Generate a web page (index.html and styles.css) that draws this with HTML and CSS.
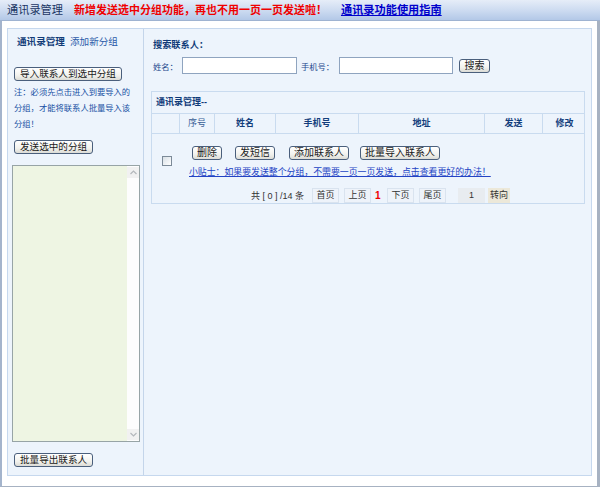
FILE: index.html
```html
<!DOCTYPE html>
<html lang="zh-CN">
<head>
<meta charset="utf-8">
<title>通讯录管理</title>
<link rel="stylesheet" href="styles.css">
</head>
<body>
<div class="topbar">
  <span class="tb-title">通讯录管理</span>
  <span class="tb-news">新增发送选中分组功能，再也不用一页一页发送啦！</span>
  <a class="tb-guide" href="#">通讯录功能使用指南</a>
</div>
<div class="frame">
  <div class="panel">
    <aside class="side">
      <div class="side-head"><b>通讯录管理</b><a href="#">添加新分组</a></div>
      <button class="btn btn-side btn-import">导入联系人到选中分组</button>
      <p class="note">注：必须先点击进入到要导入的<br>分组，才能将联系人批量导入该<br>分组！</p>
      <button class="btn btn-side btn-send">发送选中的分组</button>
      <div class="groupbox">
        <div class="gb-area"></div>
        <div class="gb-scroll">
          <span class="arr"><svg width="7" height="5" viewBox="0 0 7 5"><polyline points="0.5,4 3.5,1 6.5,4" fill="none" stroke="#b4b8bc" stroke-width="1.2"/></svg></span>
          <span class="arr"><svg width="7" height="5" viewBox="0 0 7 5"><polyline points="0.5,1 3.5,4 6.5,1" fill="none" stroke="#b4b8bc" stroke-width="1.2"/></svg></span>
        </div>
      </div>
      <button class="btn btn-side btn-export">批量导出联系人</button>
    </aside>
    <main class="main">
      <div class="search">
        <div class="s-title">搜索联系人：</div>
        <div class="s-row">
          <label class="s-label">姓名：</label>
          <input class="s-input s-name" type="text">
          <label class="s-label s-label2">手机号：</label>
          <input class="s-input s-phone" type="text">
          <button class="btn btn-search">搜索</button>
        </div>
      </div>
      <div class="list">
        <div class="list-title">通讯录管理--</div>
        <div class="list-cols">
          <div class="col"></div>
          <div class="col col-light">序号</div>
          <div class="col">姓名</div>
          <div class="col">手机号</div>
          <div class="col">地址</div>
          <div class="col">发送</div>
          <div class="col">修改</div>
        </div>
        <div class="list-body">
          <div class="lb-check"><span class="checkbox"></span></div>
          <div class="lb-main">
            <div class="actions">
              <button class="btn btn-act">删除</button>
              <button class="btn btn-act">发短信</button>
              <button class="btn btn-act">添加联系人</button>
              <button class="btn btn-act">批量导入联系人</button>
            </div>
            <a class="tip" href="#">小贴士：如果要发送整个分组，不需要一页一页发送，点击查看更好的办法！</a>
            <div class="pager">
              <span class="pg-total">共 [ 0 ] /14 条</span>
              <span class="pg-box">首页</span>
              <span class="pg-box pg-prev">上页</span>
              <span class="pg-cur">1</span>
              <span class="pg-box">下页</span>
              <span class="pg-box pg-last">尾页</span>
              <span class="pg-input">1</span>
              <span class="pg-go">转向</span>
            </div>
          </div>
        </div>
      </div>
    </main>
  </div>
</div>
</body>
</html>
```

FILE: styles.css
```css
* { box-sizing: border-box; }
html, body { margin: 0; padding: 0; }
body {
  width: 600px;
  height: 487px;
  overflow: hidden;
  background: #fff;
  font-family: "Liberation Sans", "Noto Sans CJK SC", sans-serif;
  color: #1e4a8e;
}
a { color: inherit; text-decoration: none; }

.topbar {
  height: 21px;
  border-bottom: 1px solid #9fb3d1;
  background: linear-gradient(#e6edf8, #cbdaf0 55%, #b3c8e7);
  display: flex;
  align-items: center;
  padding-left: 7px;
  white-space: nowrap;
}
.tb-title { font-size: 11.2px; line-height: 20px; color: #1b3563; }
.tb-news { margin-left: 11px; font-size: 11px; line-height: 20px; font-weight: bold; color: #f00000; }
.tb-guide { margin-left: 14px; font-size: 11.2px; line-height: 20px; font-weight: bold; color: #0000cc; text-decoration: underline; }

.frame {
  height: 466px;
  border-left: 2px solid #a4b4cc;
  border-right: 3px solid #a7b2c2;
  border-bottom: 1px solid #a7b2c2;
  padding: 7px 5px 10px 5px;
}
.panel {
  height: 448px;
  border: 1px solid #c6d8ee;
  background: #edf4fc;
  display: flex;
}

/* ---------- side column ---------- */
.side {
  width: 136px;
  flex: none;
  border-right: 1px solid #c4d5ea;
  padding-left: 6px;
  display: flex;
  flex-direction: column;
  align-items: flex-start;
}
.side-head {
  margin-top: 6px;
  margin-left: 3px;
  line-height: 14px;
  font-size: 9.6px;
  white-space: nowrap;
}
.side-head b { color: #123c78; }
.side-head a { margin-left: 5px; color: #2a5aa8; }

.btn {
  font-family: "Liberation Sans", "Noto Sans CJK SC", sans-serif;
  margin: 0;
  height: 14px;
  line-height: 12px;
  padding: 0 4px;
  border: 1px solid #4a5f7c;
  border-radius: 3px;
  background: linear-gradient(#ffffff, #f2f2ee 60%, #dcdcd6);
  color: #1a1a1a;
  white-space: nowrap;
  cursor: default;
}
.btn-side { font-size: 9.6px; padding: 0 5px; }
.btn-import { margin-top: 18px; }
.note {
  margin: 3px 0 0 0;
  font-size: 8.3px;
  line-height: 16px;
  color: #2052a4;
  white-space: nowrap;
}
.btn-send { margin-top: 8px; }

.groupbox {
  margin: 11px 0 0 -2px;
  width: 128px;
  height: 277px;
  border: 1px solid #97a4a6;
  display: flex;
}
.gb-area { flex: 1; background: #eef5e3; }
.gb-scroll {
  width: 12px;
  background: #fdfdfd;
  display: flex;
  flex-direction: column;
  justify-content: space-between;
  padding: 1px 0;
}
.arr {
  height: 11px;
  background: #f1f1f1;
  display: flex;
  align-items: center;
  justify-content: center;
}
.btn-export { margin-top: 11px; }

/* ---------- main column ---------- */
.main {
  flex: 1;
  padding: 9px 6px 0 7px;
}
.search { padding-left: 2px; }
.s-title {
  line-height: 14px;
  font-size: 9.2px;
  font-weight: bold;
  color: #0f3a78;
}
.s-row {
  margin-top: 5px;
  height: 17px;
  display: flex;
  align-items: center;
}
.s-label { font-size: 8.3px; color: #1e4a8e; white-space: nowrap; }
.s-input {
  height: 17px;
  margin: 0 0 0 4px;
  padding: 0;
  border: 1px solid #8fa4bf;
  background: #fff;
}
.s-name { width: 115px; }
.s-label2 { margin-left: 4px; }
.s-phone { width: 114px; margin-left: 5px; }
.btn-search { margin-left: 6px; font-size: 10px; width: 31px; padding: 0; }

.list {
  margin-top: 17px;
  width: 434px;
  border: 1px solid #c9dbef;
}
.list-title {
  height: 22px;
  border-bottom: 1px solid #c9dbef;
  padding-left: 4px;
  line-height: 21px;
  font-size: 9px;
  font-weight: bold;
  color: #0f3a78;
}
.list-cols {
  height: 20px;
  border-bottom: 1px solid #c9dbef;
  display: grid;
  grid-template-columns: 27px 35px 61px 83px 126px 58px 44px;
  margin-right: -1px;
}
.col {
  border-left: 1px solid #c9dbef;
  text-align: center;
  line-height: 19px;
  font-size: 9px;
  font-weight: bold;
  color: #133e7c;
}
.col:first-child { border-left: none; }
.col-light { font-weight: normal; color: #3a5f96; }

.list-body { height: 69px; display: flex; }
.lb-check { width: 27px; flex: none; padding: 22px 0 0 10px; }
.checkbox {
  display: block;
  width: 10px;
  height: 10px;
  border: 1px solid #7c8a98;
  background: linear-gradient(135deg, #d9e0e6, #ffffff);
}
.lb-main { flex: 1; padding: 12px 0 0 10px; }
.actions { display: flex; margin-left: 3px; }
.btn-act { font-size: 10px; margin-right: 13px; }
.btn-act:nth-child(2) { margin-right: 14px; }
.btn-act:nth-child(3) { margin-right: 11px; }
.tip {
  display: block;
  margin-top: 6px;
  line-height: 12px;
  font-size: 8.9px;
  color: #2343c4;
  text-decoration: underline;
  white-space: nowrap;
}
.pager {
  margin: 10px 0 0 62px;
  height: 15px;
  display: flex;
  align-items: center;
  font-size: 9px;
  color: #333;
  white-space: nowrap;
}
.pg-total { width: 61px; }
.pg-box {
  width: 27px;
  height: 15px;
  line-height: 13px;
  text-align: center;
  background: #eef3fa;
  border: 1px solid #d9e3ef;
  color: #333;
}
.pg-prev { margin-left: 5px; }
.pg-cur { width: 4px; margin: 0 8px 0 4px; color: #f00000; font-weight: bold; font-size: 10px; }
.pg-last { margin-left: 5px; }
.pg-input {
  margin-left: 12px;
  width: 27px;
  height: 15px;
  line-height: 15px;
  text-align: center;
  background: #e8ecf0;
  color: #333;
}
.pg-go {
  margin-left: 3px;
  width: 22px;
  height: 15px;
  line-height: 15px;
  text-align: center;
  background: #ece8d9;
  color: #333;
}
```
